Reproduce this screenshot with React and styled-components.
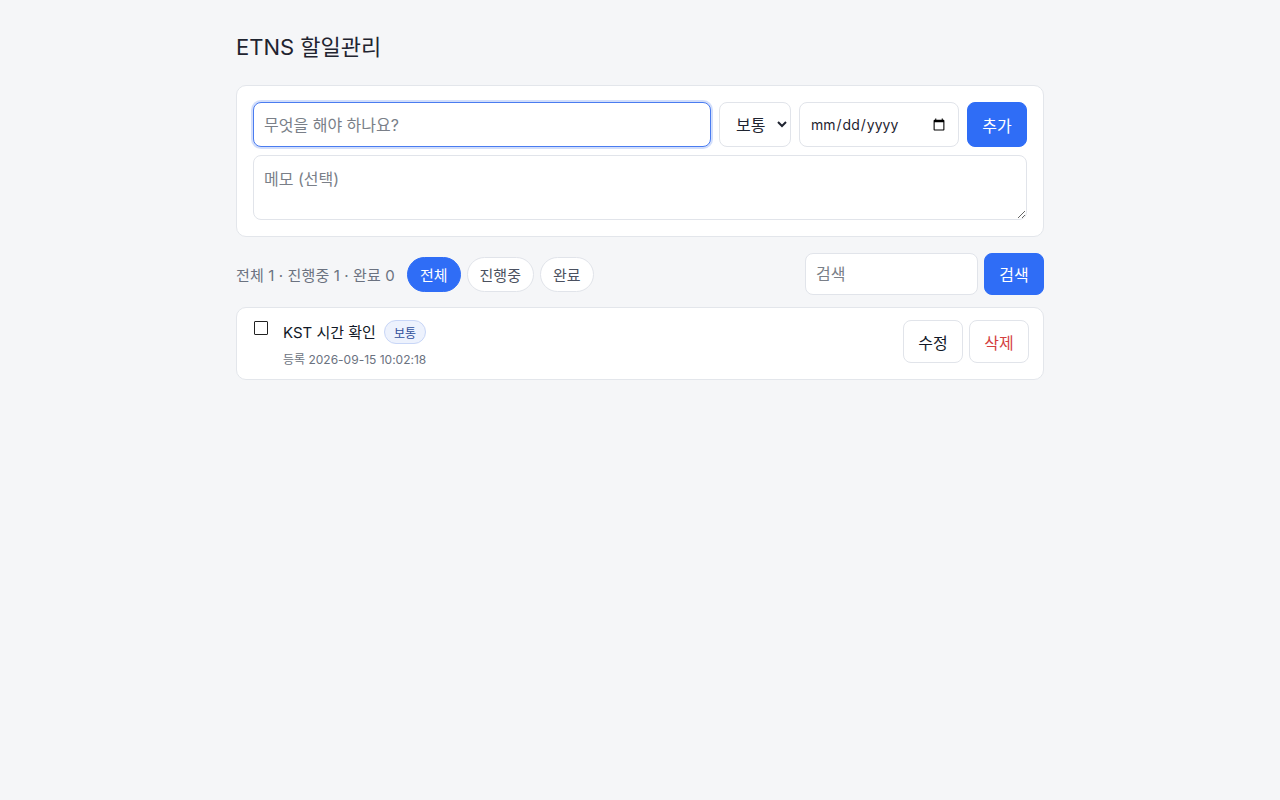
import React, { useState } from "react";
import styled, { createGlobalStyle } from "styled-components";

const Global = createGlobalStyle`
  * { box-sizing: border-box; }
  html, body { margin: 0; padding: 0; background: #f5f6f8; }
  body {
    font-family: "Inter", "Noto Sans CJK KR", sans-serif;
    color: #111827;
  }
`;

const Page = styled.div`
  width: 808px;
  margin: 0 auto;
  padding-top: 33px;
`;

const Title = styled.h1`
  margin: 0 0 24px;
  font-size: 22px;
  font-weight: 400;
  line-height: 28px;
  color: #1f2430;
`;

const Card = styled.div`
  background: #fff;
  border: 1px solid #e3e6eb;
  border-radius: 10px;
  padding: ${(p) => p.$pad || "16px"};
`;

const FormRow = styled.div`
  display: flex;
  gap: 8px;
`;

const Field = styled.input`
  height: ${(p) => p.$h || 45}px;
  width: ${(p) => (p.$w ? `${p.$w}px` : "auto")};
  flex: ${(p) => (p.$grow ? 1 : "none")};
  border: 1px solid ${(p) => (p.$focus ? "#4a7cf0" : "#e1e4ea")};
  box-shadow: ${(p) => (p.$focus ? "0 0 0 2px rgba(74,124,240,0.25)" : "none")};
  border-radius: 8px;
  padding: 0 10px;
  font-family: inherit;
  font-size: ${(p) => p.$fs || 16}px;
  color: #1f2430;
  background: #fff;
  outline: none;
  &::placeholder { color: #7a7f88; }
`;

const Select = styled.select`
  height: 45px;
  width: 72px;
  border: 1px solid #e1e4ea;
  border-radius: 8px;
  padding: 0 6px 0 12px;
  font-family: inherit;
  font-size: 16px;
  color: #1f2430;
  background: #fff;
  outline: none;
`;

const Memo = styled.textarea`
  display: block;
  width: 100%;
  height: 65px;
  margin-top: 8px;
  border: 1px solid #e1e4ea;
  border-radius: 8px;
  padding: 10px;
  font-family: inherit;
  font-size: 16px;
  color: #111827;
  resize: vertical;
  outline: none;
  &::placeholder { color: #7a7f88; }
`;

const Button = styled.button`
  height: ${(p) => p.$h || 45}px;
  width: 60px;
  flex: none;
  border-radius: 8px;
  font-family: inherit;
  font-size: 16px;
  cursor: pointer;
  border: 1px solid ${(p) => (p.$primary ? "#2f6df6" : "#e1e4ea")};
  background: ${(p) => (p.$primary ? "#2f6df6" : "#fff")};
  color: ${(p) => (p.$primary ? "#fff" : p.$danger ? "#d43f3f" : "#111827")};
`;

const Toolbar = styled.div`
  display: flex;
  align-items: center;
  margin: 16px 0 12px;
  height: 42px;
`;

const Stats = styled.span`
  font-size: 15px;
  letter-spacing: 0.13px;
  color: #6b7280;
  margin-right: 12px;
`;

const Pills = styled.div`
  display: flex;
  gap: 6px;
`;

const Pill = styled.button`
  height: 35px;
  padding: 0 12px;
  border-radius: 999px;
  font-family: inherit;
  font-size: 15px;
  cursor: pointer;
  border: 1px solid ${(p) => (p.$active ? "#2f6df6" : "#e1e4ea")};
  background: ${(p) => (p.$active ? "#2f6df6" : "#fff")};
  color: ${(p) => (p.$active ? "#fff" : "#4b5160")};
`;

const Search = styled.div`
  margin-left: auto;
  display: flex;
  gap: 6px;
`;

const TodoRow = styled.div`
  display: flex;
  align-items: flex-start;
`;

const Check = styled.input`
  appearance: none;
  width: 14px;
  height: 14px;
  margin: 1px 15px 0 1px;
  border: 1.5px solid #222;
  border-radius: 1px;
  background: #fff;
  flex: none;
`;

const TodoBody = styled.div`
  flex: 1;
`;

const TodoTitleLine = styled.div`
  display: flex;
  align-items: center;
  gap: 8px;
  height: 24px;
  font-size: 15px;
  color: #111827;
`;

const TitleText = styled.span`
  position: relative;
  top: -1px;
`;

const Badge = styled.span`
  display: inline-flex;
  align-items: center;
  height: 24px;
  padding: 0 9px;
  border-radius: 999px;
  background: #edf2fd;
  border: 1px solid #c8d6f7;
  color: #2f4f9a;
  font-size: 12px;
`;

const Meta = styled.div`
  margin-top: 6px;
  font-size: 12px;
  color: #6b7280;
`;

const Actions = styled.div`
  display: flex;
  gap: 6px;
`;

export default function App() {
  const [filter, setFilter] = useState("all");
  return (
    <>
      <Global />
      <Page>
        <Title>ETNS 할일관리</Title>
        <Card>
          <FormRow>
            <Field $grow $focus placeholder="무엇을 해야 하나요?" />
            <Select defaultValue="보통">
              <option>낮음</option>
              <option>보통</option>
              <option>높음</option>
            </Select>
            <Field type="date" $w={160} $fs={14} />
            <Button $primary>추가</Button>
          </FormRow>
          <Memo placeholder="메모 (선택)" />
        </Card>

        <Toolbar>
          <Stats>전체 1 · 진행중 1 · 완료 0</Stats>
          <Pills>
            <Pill $active={filter === "all"} onClick={() => setFilter("all")}>전체</Pill>
            <Pill $active={filter === "doing"} onClick={() => setFilter("doing")}>진행중</Pill>
            <Pill $active={filter === "done"} onClick={() => setFilter("done")}>완료</Pill>
          </Pills>
          <Search>
            <Field $h={42} $w={173} placeholder="검색" />
            <Button $primary $h={42}>검색</Button>
          </Search>
        </Toolbar>

        <Card $pad="12px 14px 12px 16px">
          <TodoRow>
            <Check type="checkbox" />
            <TodoBody>
              <TodoTitleLine>
                <TitleText>KST 시간 확인</TitleText>
                <Badge>보통</Badge>
              </TodoTitleLine>
              <Meta>등록 2026-09-15 10:02:18</Meta>
            </TodoBody>
            <Actions>
              <Button $h={43}>수정</Button>
              <Button $h={43} $danger>삭제</Button>
            </Actions>
          </TodoRow>
        </Card>
      </Page>
    </>
  );
}
